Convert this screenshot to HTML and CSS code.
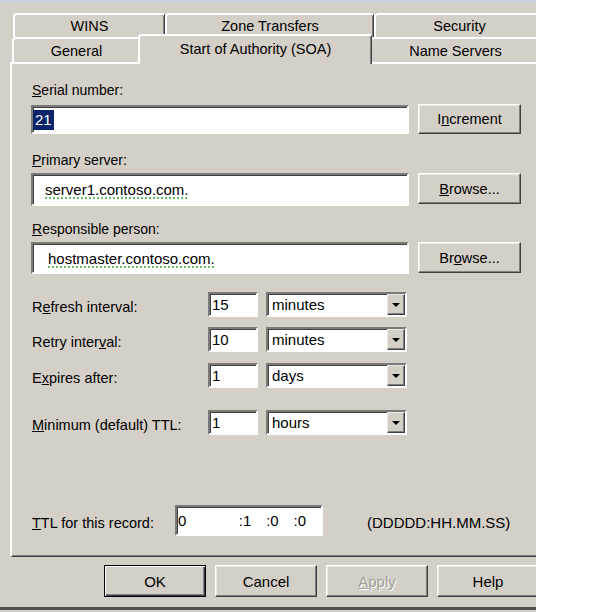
FILE: index.html
```html
<!DOCTYPE html>
<html lang="en">
<head>
    <meta charset="UTF-8">
    <title>SOA Properties</title>
    <link rel="stylesheet" href="styles.css">
</head>
<body>
    <div class="dialog">
        <div class="top-edge"></div>

        <div class="tabs">
            <div class="tab-row back">
                <div class="tab t-wins">WINS</div>
                <div class="tab t-zone">Zone Transfers</div>
                <div class="tab t-sec">Security</div>
            </div>
            <div class="tab-row front">
                <div class="tab t-general">General</div>
                <div class="tab t-soa active">Start of Authority (SOA)</div>
                <div class="tab t-ns">Name Servers</div>
            </div>
        </div>

        <div class="panel">
            <div class="label"><u>S</u>erial number:</div>
            <div class="line serial-line">
                <div class="field serial"><span class="sel">21</span></div>
                <div class="btn">I<u>n</u>crement</div>
            </div>

            <div class="label primary-label"><u>P</u>rimary server:</div>
            <div class="line">
                <div class="field primary"><span class="spell">server1.contoso.com.</span></div>
                <div class="btn browse"><u>B</u>rowse...</div>
            </div>

            <div class="label resp-label"><u>R</u>esponsible person:</div>
            <div class="line">
                <div class="field resp"><span class="spell">hostmaster.contoso.com.</span></div>
                <div class="btn browse">Br<u>o</u>wse...</div>
            </div>

            <div class="intervals">
                <div class="row">
                    <div class="row-label">R<u>e</u>fresh interval:</div>
                    <div class="field small">15</div>
                    <div class="combo"><span>minutes</span><div class="drop"><svg width="8" height="4" viewBox="0 0 8 4"><polygon points="0,0 8,0 4,4"/></svg></div></div>
                </div>
                <div class="row retry">
                    <div class="row-label">Retry inter<u>v</u>al:</div>
                    <div class="field small">10</div>
                    <div class="combo"><span>minutes</span><div class="drop"><svg width="8" height="4" viewBox="0 0 8 4"><polygon points="0,0 8,0 4,4"/></svg></div></div>
                </div>
                <div class="row expires">
                    <div class="row-label">E<u>x</u>pires after:</div>
                    <div class="field small">1</div>
                    <div class="combo"><span>days</span><div class="drop"><svg width="8" height="4" viewBox="0 0 8 4"><polygon points="0,0 8,0 4,4"/></svg></div></div>
                </div>
                <div class="row minimum">
                    <div class="row-label"><u>M</u>inimum (default) TTL:</div>
                    <div class="field small">1</div>
                    <div class="combo"><span>hours</span><div class="drop"><svg width="8" height="4" viewBox="0 0 8 4"><polygon points="0,0 8,0 4,4"/></svg></div></div>
                </div>
            </div>

            <div class="ttl-row">
                <div class="row-label"><u>T</u>TL for this record:</div>
                <div class="field ttl">
                    <span class="seg days">0</span>
                    <span class="seg">:1</span>
                    <span class="seg">:0</span>
                    <span class="seg">:0</span>
                </div>
                <div class="ttl-format">(DDDDD:HH.MM.SS)</div>
            </div>
        </div>

        <div class="buttons">
            <div class="btn default">OK</div>
            <div class="btn">Cancel</div>
            <div class="btn disabled"><u>A</u>pply</div>
            <div class="btn">Help</div>
        </div>
        <div class="bottom-edge"></div>
    </div>
</body>
</html>
```

FILE: styles.css
```css
body {
    margin: 0;
    background: #fff;
}
.dialog {
    width: 536px;
    height: 612px;
    overflow: hidden;
    background: #d4d0c8;
    font-family: "Liberation Sans", Arial, sans-serif;
    font-size: 14.5px;
    color: #000;
}
.top-edge {
    height: 3px;
    background: #c9d1e0;
}

/* tabs */
.tabs {
    padding-top: 10px;
}
.tab-row {
    display: flex;
}
.tab-row.back {
    margin-left: 13px;
    height: 24px;
}
.tab-row.front {
    margin-left: 12px;
    height: 25px;
}
.tab {
    box-sizing: border-box;
    flex: none;
    display: flex;
    align-items: center;
    justify-content: center;
    background: #d4d0c8;
    border-top: 2px solid #fff;
    border-left: 2px solid #fff;
    border-right: 1px solid #404040;
    box-shadow: inset -1px 0 #808080;
    border-top-left-radius: 4px;
    border-top-right-radius: 3px;
}
.t-wins { width: 152px; }
.t-zone { width: 209px; }
.t-sec { width: 170px; }
.t-general { width: 128px; }
.t-soa { width: 234px; }
.t-ns { width: 170px; }
.tab.active {
    position: relative;
    z-index: 1;
    height: 30px;
    margin: -3px -2px 0 -2px;
    padding-bottom: 2px;
}

/* page */
.panel {
    box-sizing: border-box;
    margin-left: 10px;
    width: 532px;
    height: 495px;
    border-top: 2px solid #fff;
    border-left: 2px solid #fff;
    border-bottom: 1px solid #404040;
    box-shadow: inset 0 -1px #808080;
    padding: 18px 0 0 19px;
}
.label {
    line-height: 17px;
    padding-left: 1px;
    font-size: 14px;
}
.primary-label {
    margin-top: 18px;
}
.resp-label {
    margin-top: 15px;
}
.line {
    display: grid;
    grid-template-columns: 378px 103px;
    column-gap: 9px;
    align-items: start;
    margin-top: 4px;
}
.serial-line {
    margin-top: 6px;
}

.field {
    box-sizing: border-box;
    display: flex;
    align-items: center;
    background: #fff;
    border: 2px solid;
    border-color: #7a7a7a #fff #fff #7a7a7a;
    box-shadow: inset 1px 1px #404040;
    font-size: 15px;
    white-space: nowrap;
}
.serial {
    height: 29px;
}
.sel {
    background: #0a246a;
    color: #fff;
    line-height: 20px;
    padding: 0 2px;
}
.primary {
    height: 33px;
    padding-left: 12px;
}
.resp {
    height: 32px;
    padding-left: 15px;
}
.spell {
    text-decoration: underline dotted #3aa63a;
    text-underline-offset: 3px;
}

.btn {
    box-sizing: border-box;
    display: flex;
    align-items: center;
    justify-content: center;
    background: #d4d0c8;
    border: 1px solid;
    border-color: #fff #404040 #404040 #fff;
    box-shadow: inset -1px -1px #808080, inset 1px 1px #ebe9e4;
    white-space: nowrap;
}
.serial-line .btn {
    height: 30px;
    margin-top: -1px;
}
.btn.browse {
    height: 31px;
}

/* interval rows */
.intervals {
    margin-top: 18px;
}
.row {
    display: grid;
    grid-template-columns: 169px 50px 141px;
    column-gap: 8px;
    height: 25px;
}
.retry { margin-top: 10px; }
.expires { margin-top: 11px; }
.minimum { margin-top: 22px; }
.row-label {
    align-self: center;
    padding: 4px 0 0 1px;
    white-space: nowrap;
}
.field.small {
    padding-left: 2px;
}
.combo {
    box-sizing: border-box;
    display: flex;
    align-items: center;
    justify-content: space-between;
    background: #fff;
    border: 2px solid;
    border-color: #7a7a7a #fff #fff #7a7a7a;
    box-shadow: inset 1px 1px #404040;
    padding-left: 4px;
    font-size: 15px;
}
.drop {
    box-sizing: border-box;
    width: 18px;
    height: 100%;
    display: flex;
    align-items: center;
    justify-content: center;
    background: #d4d0c8;
    border: 1px solid;
    border-color: #ebe9e4 #404040 #404040 #ebe9e4;
    box-shadow: inset -1px -1px #808080;
}

/* ttl */
.ttl-row {
    display: grid;
    grid-template-columns: 144px 148px auto;
    height: 31px;
    margin-top: 70px;
}
.field.ttl {
    padding-left: 1px;
}
.seg {
    display: inline-block;
    width: 28px;
}
.seg.days {
    width: 62px;
}
.ttl-format {
    align-self: center;
    padding-top: 3px;
    margin-left: 44px;
    font-size: 15px;
    white-space: nowrap;
}

/* dialog buttons */
.buttons {
    display: flex;
    gap: 9px;
    margin-top: 8px;
    padding-left: 104px;
}
.buttons .btn {
    flex: none;
    width: 102px;
    height: 32px;
    font-size: 15px;
}
.btn.default {
    border: 1px solid #000;
    box-shadow: inset 1px 1px #fff, inset -1px -1px #404040, inset -2px -2px #808080;
}
.btn.disabled {
    color: #a09d96;
    text-shadow: 1px 1px #fff;
}
.bottom-edge {
    height: 3px;
    margin-top: 10px;
    background: #505050;
}
```
